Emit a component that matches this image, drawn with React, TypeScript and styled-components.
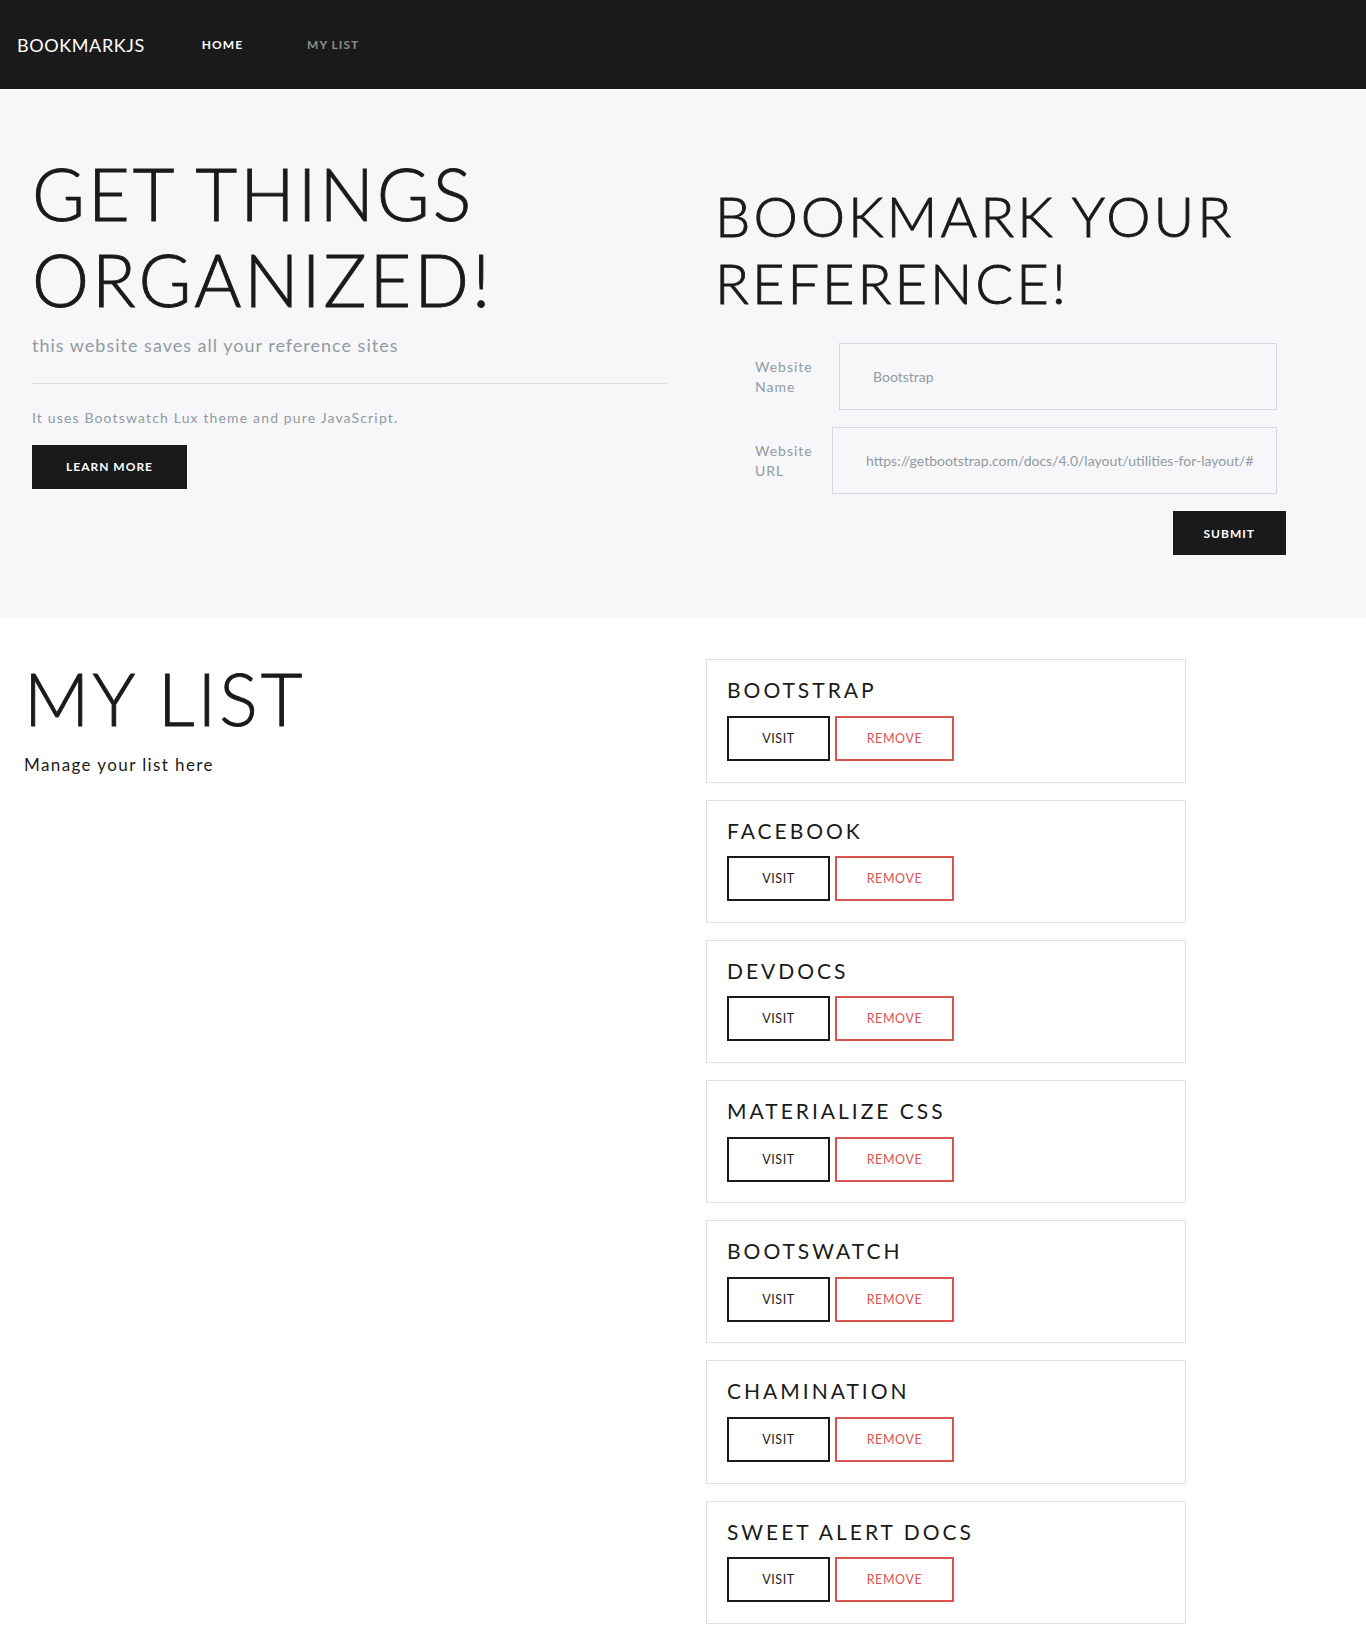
import React from "react";
import styled, { createGlobalStyle } from "styled-components";

const GlobalStyle = createGlobalStyle`
  html, body {
    margin: 0;
    padding: 0;
    background: #ffffff;
    font-family: "Lato", "Open Sans", "DejaVu Sans", sans-serif;
    color: #1a1a1a;
  }
  * { box-sizing: border-box; }
`;

const Navbar = styled.nav`
  height: 89px;
  background: #1a1a1a;
  display: flex;
  align-items: center;
  padding: 0 17px;
`;

const Brand = styled.a`
  font-size: 18px;
  color: #ffffff;
  letter-spacing: 0.6px;
  text-decoration: none;
  margin-right: 25px;
`;

const NavLink = styled.a<{ $active?: boolean }>`
  font-size: 12px;
  font-weight: 700;
  letter-spacing: 1px;
  text-transform: uppercase;
  text-decoration: none;
  padding: 0 32px;
  color: ${(p) => (p.$active ? "#ffffff" : "rgba(255,255,255,0.5)")};
`;

const Hero = styled.section`
  background: #f7f7f9;
  display: grid;
  grid-template-columns: 683px 683px;
  align-items: start;
  padding-bottom: 63px;
`;

const Column = styled.div<{ $top: number; $left: number; $right?: number }>`
  display: flex;
  flex-direction: column;
  align-items: stretch;
  padding: ${(p) => `${p.$top}px ${p.$right ?? 0}px 0 ${p.$left}px`};
`;

const Display = styled.h1<{ $size: number }>`
  margin: 0;
  font-size: ${(p) => p.$size}px;
  line-height: 1.2;
  font-weight: 300;
  letter-spacing: 3px;
  text-transform: uppercase;
  color: #1a1a1a;
  -webkit-text-stroke: 0.9px #1a1a1a;
`;

const Lead = styled.p`
  margin: 9px 0 0;
  font-size: 18px;
  line-height: 27px;
  letter-spacing: 1px;
  color: #919aa1;
`;

const Divider = styled.hr`
  margin: 24px 0 0;
  border: 0;
  border-top: 1px solid rgba(0, 0, 0, 0.1);
  height: 0;
`;

const SmallText = styled.p`
  margin: 23px 0 0;
  font-size: 14px;
  line-height: 21px;
  letter-spacing: 1.15px;
  color: #919aa1;
`;

const DarkButton = styled.button<{ $mt: number; $px: number }>`
  align-self: flex-start;
  margin-top: ${(p) => p.$mt}px;
  height: 44px;
  padding: 0 ${(p) => p.$px}px;
  border: 0;
  background: #1a1a1a;
  color: #ffffff;
  font-family: inherit;
  font-size: 12px;
  font-weight: 700;
  letter-spacing: 1px;
  text-transform: uppercase;
  cursor: pointer;
`;

const Form = styled.form`
  margin: 27px 0 0 40px;
  width: 531px;
  display: flex;
  flex-direction: column;
`;

const FormRow = styled.div`
  display: flex;
  align-items: center;
  padding-right: 9px;
  margin-bottom: 17px;
`;

const Label = styled.label<{ $width: number }>`
  width: ${(p) => p.$width}px;
  flex: none;
  font-size: 14px;
  line-height: 20px;
  letter-spacing: 1px;
  color: #919aa1;
`;

const Input = styled.input`
  flex: 1;
  min-width: 0;
  height: 67px;
  padding: 0 20px 0 33px;
  border: 1px solid #d5d8dc;
  background: transparent;
  font-family: inherit;
  font-size: 14px;
  color: #55595c;
  outline: none;
  &::placeholder {
    color: #919aa1;
  }
`;

const SubmitRow = styled.div`
  display: flex;
  justify-content: flex-end;
`;

const ListSection = styled.section`
  display: grid;
  grid-template-columns: 683px 683px;
  align-items: start;
`;

const Manage = styled.p`
  margin: 10px 0 0;
  font-size: 17px;
  line-height: 25.5px;
  letter-spacing: 1.4px;
  color: #1a1a1a;
`;

const Cards = styled.div`
  padding: 41px 0 17px 23px;
  display: flex;
  flex-direction: column;
  gap: 17px;
`;

const Card = styled.div`
  width: 480px;
  border: 1px solid #dfdfdf;
  padding: 17px 20px 20.5px;
`;

const CardTitle = styled.h4`
  margin: 0 0 13.5px;
  font-size: 21px;
  line-height: 1.2;
  font-weight: 400;
  letter-spacing: 3px;
  text-transform: uppercase;
  color: #1a1a1a;
`;

const ButtonRow = styled.div`
  display: flex;
  gap: 5px;
`;

const OutlineButton = styled.button<{ $color: string; $width: number }>`
  width: ${(p) => p.$width}px;
  height: 45px;
  padding: 0;
  border: 2px solid ${(p) => p.$color};
  background: transparent;
  color: ${(p) => p.$color};
  font-family: inherit;
  font-size: 12.5px;
  letter-spacing: 0.6px;
  text-transform: uppercase;
  cursor: pointer;
`;

const bookmarks = [
  "Bootstrap",
  "Facebook",
  "DevDocs",
  "Materialize CSS",
  "Bootswatch",
  "Chamination",
  "Sweet Alert Docs",
];

export default function App() {
  return (
    <>
      <GlobalStyle />
      <Navbar>
        <Brand href="#">BOOKMARKJS</Brand>
        <NavLink href="#" $active>
          Home
        </NavLink>
        <NavLink href="#">My List</NavLink>
      </Navbar>

      <Hero>
        <Column $top={61} $left={32} $right={16}>
          <Display $size={72}>
            Get things
            <br />
            organized!
          </Display>
          <Lead>this website saves all your reference sites</Lead>
          <Divider />
          <SmallText>It uses Bootswatch Lux theme and pure JavaScript.</SmallText>
          <DarkButton type="button" $mt={17} $px={34}>
            Learn more
          </DarkButton>
        </Column>

        <Column $top={93} $left={32}>
          <Display $size={56}>
            Bookmark your
            <br />
            reference!
          </Display>
          <Form onSubmit={(e) => e.preventDefault()}>
            <FormRow>
              <Label $width={84}>
                Website
                <br />
                Name
              </Label>
              <Input type="text" placeholder="Bootstrap" />
            </FormRow>
            <FormRow>
              <Label $width={77}>
                Website
                <br />
                URL
              </Label>
              <Input
                type="text"
                placeholder="https://getbootstrap.com/docs/4.0/layout/utilities-for-layout/#"
              />
            </FormRow>
            <SubmitRow>
              <DarkButton type="submit" $mt={0} $px={31}>
                Submit
              </DarkButton>
            </SubmitRow>
          </Form>
        </Column>
      </Hero>

      <ListSection>
        <Column $top={37} $left={24}>
          <Display $size={72}>My list</Display>
          <Manage>Manage your list here</Manage>
        </Column>
        <Cards>
          {bookmarks.map((name) => (
            <Card key={name}>
              <CardTitle>{name}</CardTitle>
              <ButtonRow>
                <OutlineButton type="button" $color="#1a1a1a" $width={103}>
                  Visit
                </OutlineButton>
                <OutlineButton type="button" $color="#d9534f" $width={119}>
                  Remove
                </OutlineButton>
              </ButtonRow>
            </Card>
          ))}
        </Cards>
      </ListSection>
    </>
  );
}
